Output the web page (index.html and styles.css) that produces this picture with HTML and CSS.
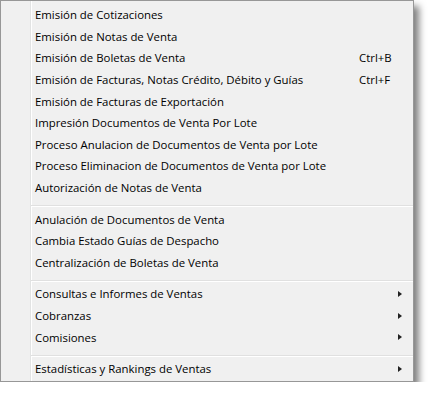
FILE: index.html
```html
<!DOCTYPE html>
<html lang="es">
<head>
  <meta charset="UTF-8" />
  <meta name="viewport" content="width=device-width, initial-scale=1.0" />
  <title>Menú Ventas</title>
  <link rel="stylesheet" href="styles.css">
</head>
<body>
  <div class="menu">
    <div class="item"><span class="label">Emisión de Cotizaciones</span></div>
    <div class="item"><span class="label">Emisión de Notas de Venta</span></div>
    <div class="item"><span class="label">Emisión de Boletas de Venta</span><span class="key">Ctrl+B</span></div>
    <div class="item"><span class="label">Emisión de Facturas, Notas Crédito, Débito y Guías</span><span class="key">Ctrl+F</span></div>
    <div class="item"><span class="label">Emisión de Facturas de Exportación</span></div>
    <div class="item"><span class="label">Impresión Documentos de Venta Por Lote</span></div>
    <div class="item"><span class="label">Proceso Anulacion de Documentos de Venta por Lote</span></div>
    <div class="item"><span class="label">Proceso Eliminacion de Documentos de Venta por Lote</span></div>
    <div class="item"><span class="label">Autorización de Notas de Venta</span></div>
    <div class="sep"></div>
    <div class="item"><span class="label">Anulación de Documentos de Venta</span></div>
    <div class="item"><span class="label">Cambia Estado Guías de Despacho</span></div>
    <div class="item"><span class="label">Centralización de Boletas de Venta</span></div>
    <div class="sep"></div>
    <div class="item"><span class="label">Consultas e Informes de Ventas</span><span class="arrow"></span></div>
    <div class="item"><span class="label">Cobranzas</span><span class="arrow"></span></div>
    <div class="item"><span class="label">Comisiones</span><span class="arrow"></span></div>
    <div class="sep"></div>
    <div class="item"><span class="label">Estadísticas y Rankings de Ventas</span><span class="arrow"></span></div>
  </div>
</body>
</html>
```

FILE: styles.css
```css
body {
  margin: 0;
  background-color: #ffffff;
  font-family: "Open Sans", "Noto Sans", sans-serif;
  font-size: 11.4px;
  color: #000000;
}
.menu {
  box-sizing: border-box;
  width: 414px;
  padding: 3px 0 1px;
  border: 1px solid #979797;
  background: linear-gradient(to right, #f0f0f0 29px, #e2e3e3 29px 30px, #ffffff 30px 31px, #f0f0f0 31px);
  box-shadow: 5px 6px 7px rgba(0, 0, 0, 0.5);
  display: flex;
  flex-direction: column;
}
.item {
  height: 21.6px;
  display: flex;
  align-items: center;
  padding: 0 11px 0 34px;
  white-space: nowrap;
}
.label {
  flex: 1;
}
.key {
  width: 43px;
}
.arrow {
  width: 0;
  height: 0;
  border-top: 3.5px solid transparent;
  border-bottom: 3.5px solid transparent;
  border-left: 4px solid #222222;
}
.sep {
  height: 10px;
  margin-left: 30px;
  background: linear-gradient(to bottom, transparent 7px, #e0e0e0 7px 8px, #ffffff 8px 9px, transparent 9px);
}
```
